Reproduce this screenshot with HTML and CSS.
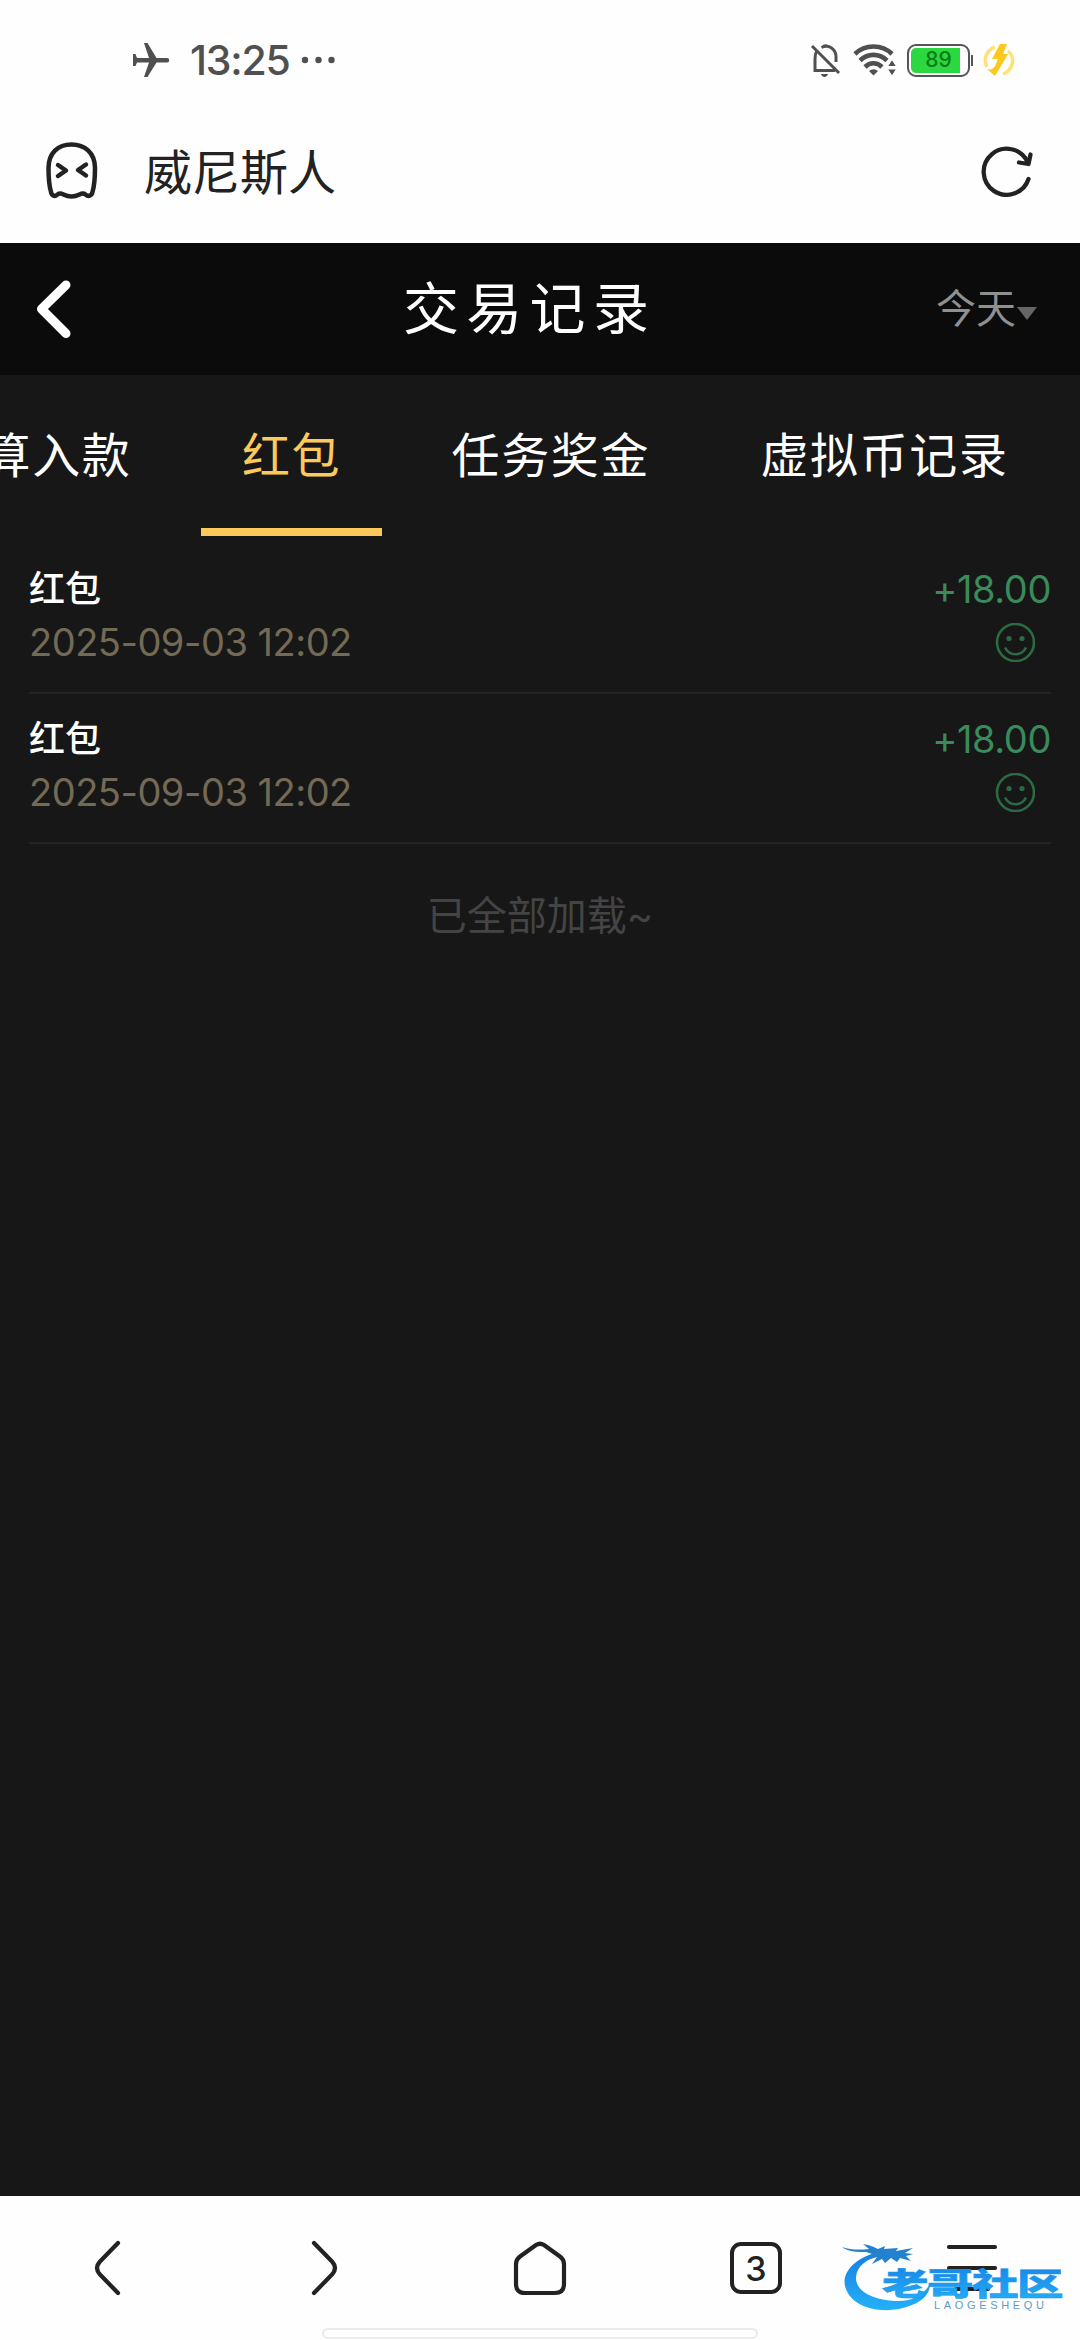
FILE: index.html
```html
<!DOCTYPE html>
<html lang="zh-CN">
<head>
    <meta charset="UTF-8">
    <meta name="viewport" content="width=device-width, initial-scale=1.0">
    <title>交易记录</title>
    <link rel="stylesheet" href="styles.css">
</head>
<body>
    <div class="status-bar">
        <div class="status-left">
            <svg class="plane" width="38" height="36" viewBox="0 0 38 36">
                <path fill="#505050" d="M1 12h2.500l1.500 4h12L12 1h3.500l9 15H35a2.200 2.200 0 0 1 0 4.500H24.500l-9 14.500H12l5-14.500H5L3.500 24H1z"/>
            </svg>
            <span class="time">13:25</span>
            <svg width="34" height="10" viewBox="0 0 34 10" fill="#505050">
                <circle cx="4" cy="5" r="3.200"/><circle cx="17.500" cy="5" r="3.200"/><circle cx="30.500" cy="5" r="3.200"/>
            </svg>
        </div>
        <div class="status-right">
            <svg width="32" height="36" viewBox="0 0 32 36" fill="none" stroke="#505050" stroke-width="3">
                <path d="M2 4l27 27"/>
                <path d="M11.500 5.500C19 2 26 7 26 15v5"/>
                <path d="M6.500 9.500C5 12 5 14 5 17v11.500h20"/>
                <path fill="#505050" stroke="none" d="M12 4.500c1-3 6-3 7 0zM11 32h7c-1 4-6 4-7 0z"/>
            </svg>
            <svg class="wifi" width="44" height="36" viewBox="0 0 44 36" fill="none" stroke="#505050" stroke-width="4.600">
                <path d="M2 12C12 2 29 2 39 12"/>
                <path d="M7 18.500c8-7.500 19-7.500 27 0"/>
                <path d="M12 25c5-5 12-5 17 0"/>
                <path fill="#505050" stroke="none" d="M16 29q4.500-3.500 9 0l-4.500 4.500z"/>
                <path fill="#505050" stroke="#fefefe" stroke-width="1" d="M39 17.500l4.500 7h-9zM39 34l4.500-7h-9z"/>
            </svg>
            <div class="battery"><div class="battery-level">89</div></div>
            <svg class="charge" width="34" height="36" viewBox="0 0 34 36">
                <path fill="none" stroke="#ffe07a" stroke-width="3.500" d="M12 5A14 14 0 0 0 4 25M25 9c8 7 5 19-5 23"/>
                <path fill="#fbc81b" d="M17 2h7l-4 10h5L12 34l-8-7c4 1 6 0 8-3l3-7H9z"/>
            </svg>
        </div>
    </div>

    <div class="address-bar">
        <svg class="ghost" width="54" height="58" viewBox="0 0 54 58" fill="none" stroke="#222" stroke-width="4.500" stroke-linecap="round" stroke-linejoin="round">
            <path d="M3.500 27C3.500 12 13 3.500 26.500 3.500S50 12 50 27c0 9-.5 17-2.500 24-1 4-4 5-7 2.500-2-1.500-4-1-6 0-5 2.500-11 2.500-16 0-2-1-4-1.500-6 0-3 2.500-5.500 1.500-6.500-2.500C4 44 3.500 36 3.500 27z"/>
            <path d="M13 24l8 5.500-8 5.500M41 23.500L33 29l8 5.500"/>
        </svg>
        <span class="site-name">威尼斯人</span>
        <svg class="refresh" width="54" height="54" viewBox="0 0 54 54" fill="none" stroke="#222" stroke-width="4.300" stroke-linecap="round" stroke-linejoin="round">
            <path d="M48.500 36A23 23 0 1 1 47.500 19"/>
            <path d="M50.500 11.500L48.500 21l-9.500-1.500"/>
        </svg>
    </div>

    <div class="header">
        <svg class="back" width="40" height="64" viewBox="0 0 40 64" fill="none" stroke="#fff" stroke-width="9" stroke-linecap="round" stroke-linejoin="round">
            <path d="M34 8L9.500 32 34 56.500"/>
        </svg>
        <h1>交易记录</h1>
        <div class="filter">今天<span class="arrow"></span></div>
    </div>

    <div class="tabs">
        <div class="tab">结算入款</div>
        <div class="tab active">红包</div>
        <div class="tab">任务奖金</div>
        <div class="tab">虚拟币记录</div>
    </div>

    <div class="records">
        <div class="record">
            <div>
                <div class="record-name">红包</div>
                <div class="record-date">2025-09-03 12:02</div>
            </div>
            <div class="record-right">
                <div class="amount">+18.00</div>
                <svg class="smile" width="40" height="39" viewBox="0 0 40 39" fill="none" stroke="#2c6a46" stroke-width="2.600">
                    <circle cx="20.500" cy="19.500" r="18.500"/>
                    <path d="M10 24.500c4.500 9 16.500 9 21 0"/>
                    <circle cx="14" cy="15.500" r="2.600" fill="#2c6a46" stroke="none"/>
                    <circle cx="27" cy="15.500" r="2.600" fill="#2c6a46" stroke="none"/>
                </svg>
            </div>
        </div>
        <div class="record">
            <div>
                <div class="record-name">红包</div>
                <div class="record-date">2025-09-03 12:02</div>
            </div>
            <div class="record-right">
                <div class="amount">+18.00</div>
                <svg class="smile" width="40" height="39" viewBox="0 0 40 39" fill="none" stroke="#2c6a46" stroke-width="2.600">
                    <circle cx="20.500" cy="19.500" r="18.500"/>
                    <path d="M10 24.500c4.500 9 16.500 9 21 0"/>
                    <circle cx="14" cy="15.500" r="2.600" fill="#2c6a46" stroke="none"/>
                    <circle cx="27" cy="15.500" r="2.600" fill="#2c6a46" stroke="none"/>
                </svg>
            </div>
        </div>
        <p class="all-loaded">已全部加载~</p>
    </div>

    <div class="bottom-bar">
        <div class="nav">
            <svg width="56" height="56" viewBox="0 0 56 56"><path d="M38 3L20 21.500q-6 6.500 0 13L38 53"/></svg>
            <svg width="56" height="56" viewBox="0 0 56 56"><path d="M18 3l18 18.500q6 6.500 0 13L18 53"/></svg>
            <svg width="56" height="56" viewBox="0 0 56 56"><path d="M24 5Q28 2.500 32 5L48 16.500Q52 19.500 52 24v20q0 9-9 9H13q-9 0-9-9V24q0-4.500 4-7.500z"/></svg>
            <div class="tab-count">3</div>
            <svg width="56" height="56" viewBox="0 0 56 56"><path d="M5 7h46M5 28h46M12 49h32"/></svg>
        </div>
        <div class="home-indicator"></div>

        <!-- community logo, floats over the menu button -->
        <svg class="logo" width="228" height="80" viewBox="0 0 228 80">
            <defs>
                <linearGradient id="blue" x1="0" y1="0" x2="0" y2="1">
                    <stop offset="0" stop-color="#1580e4"/>
                    <stop offset="1" stop-color="#24b0f8"/>
                </linearGradient>
            </defs>
            <path fill="url(#blue)" d="M34 14C12 20-1 36 5 50c7 20 40 27 66 16 13-5 18-13 18-21-7 12-20 18-35 17C32 61 14 52 15 38c1-11 10-18 26-22z"/>
            <path fill="#2381ce" d="M1 8c9 3 17 3 27 2l-6-5c7 1 11 3 15 5l7-3-1 3 14-1-2 3 17-3-8 5 8 1-7 2 5 5-11-3-3 4-6-4-6 5-3-4-10 5 5-7-10 3 5-6-6-2C16 13 8 13 1 8z"/>
            <text class="logo-name" x="41" y="56" textLength="121" lengthAdjust="spacing" transform="matrix(1.500 0 0 1 -20.500 0)">老哥社区</text>
            <text class="logo-latin" x="93" y="70" textLength="110" lengthAdjust="spacing">LAOGESHEQU</text>
        </svg>
    </div>
</body>
</html>
```
FILE: styles.css
```css
* {
    box-sizing: border-box;
}

body {
    margin: 0;
    height: 2340px;
    display: flex;
    flex-direction: column;
    overflow: hidden;
    background-color: #171717;
    font-family: Inter, "Noto Sans CJK SC", sans-serif;
}

svg {
    display: block;
    flex: none;
}

/* Phone status bar */
.status-bar {
    height: 120px;
    padding: 0 63px 0 132px;
    display: flex;
    justify-content: space-between;
    align-items: center;
    background: #fefefe;
}

.status-left, .status-right {
    display: flex;
    align-items: center;
}

.time {
    width: 98px;
    margin: 0 13px 0 20px;
    font-size: 41px;
    font-weight: 450;
    letter-spacing: -1.2px;
    color: #505050;
    white-space: nowrap;
}

.wifi {
    margin-left: 11px;
}

.battery {
    position: relative;
    width: 63px;
    height: 33px;
    margin-left: 10px;
    padding: 2px;
    border: 2px solid #555;
    border-radius: 9px;
}

.battery::after {
    content: "";
    position: absolute;
    right: -5px;
    top: 9px;
    width: 2px;
    height: 11px;
    background: #555;
}

.battery-level {
    width: 49px;
    height: 25px;
    padding-left: 6px;
    border-radius: 5px 0 0 5px;
    background: #2bd840;
    color: #087d16;
    font-size: 21px;
    font-weight: 500;
    line-height: 24px;
    text-align: center;
}

.charge {
    margin-left: 13px;
}

/* Browser address bar */
.address-bar {
    height: 123px;
    padding: 0 46px 23px 45px;
    display: flex;
    align-items: center;
    background: #fefefe;
}

.site-name {
    flex: 1;
    margin: 5px 0 0 45px;
    font-size: 48px;
    line-height: 60px;
    color: #222;
}

.refresh {
    margin-bottom: 1px;
}

/* Page header */
.header {
    height: 132px;
    padding: 0 43px 0 32px;
    display: flex;
    align-items: center;
    background: #0b0b0b;
}

.header h1 {
    flex: 1;
    margin: 0 0 0 331px;
    font-size: 56px;
    font-weight: 400;
    line-height: 80px;
    letter-spacing: 7.3px;
    color: #fff;
}

.filter {
    display: flex;
    align-items: center;
    font-size: 40px;
    line-height: 60px;
    color: #909090;
}

.arrow {
    margin: 8px 0 0 1px;
    border: 10.5px solid transparent;
    border-top: 13px solid #666;
    border-bottom: 0;
}

/* Tabs */
.tabs {
    height: 161px;
    margin-left: -108px;
    display: flex;
    gap: 28.5px;
    white-space: nowrap;
}

.tab {
    flex: none;
    height: 161px;
    padding: 0 41px;
    border-bottom: 8px solid transparent;
    font-size: 48px;
    line-height: 162px;
    letter-spacing: 1.6px;
    color: #fff;
}

.tab.active {
    border-color: #fdc95c;
    color: #fdc95c;
}

/* Records */
.records {
    flex: 1;
    padding: 0 29px;
}

.record {
    height: 150px;
    padding-top: 17px;
    display: flex;
    justify-content: space-between;
    border-bottom: 2px solid #232323;
}

.record:first-child {
    height: 158px;
    padding-top: 25px;
}

.record-name {
    font-size: 36px;
    font-weight: 500;
    line-height: 57px;
    color: #fff;
}

.record-date {
    font-size: 38px;
    line-height: 49px;
    letter-spacing: -0.5px;
    color: #736a55;
}

.record-right {
    display: flex;
    flex-direction: column;
    align-items: flex-end;
}

.amount {
    font-size: 38px;
    line-height: 57px;
    letter-spacing: -0.4px;
    color: #3a8a5b;
}

.smile {
    margin: 5px 16px 0 0;
}

.all-loaded {
    margin: 42px 0 0;
    text-align: center;
    font-size: 40px;
    line-height: 60px;
    color: #444;
}

/* Browser bottom bar */
.bottom-bar {
    position: relative;
    height: 144px;
    padding-top: 44px;
    background: #fefefe;
}

.nav {
    display: flex;
}

.nav svg {
    margin: 0 80px;
    fill: none;
    stroke: #222;
    stroke-width: 4.2;
    stroke-linecap: round;
    stroke-linejoin: round;
}

.tab-count {
    width: 52px;
    height: 52px;
    margin: 2px 82px;
    border: 4px solid #222;
    border-radius: 11px;
    color: #222;
    font-size: 34px;
    font-weight: 500;
    line-height: 45px;
    text-align: center;
}

.home-indicator {
    width: 436px;
    height: 11px;
    margin: 32px auto 0;
    border: 2px solid #ebebeb;
    border-radius: 6px;
}

.logo {
    position: absolute;
    left: 841px;
    top: 43px;
}

.logo-name {
    font-family: "Noto Sans CJK SC", sans-serif;
    font-size: 31px;
    font-weight: 900;
    fill: url(#blue);
    stroke: #1d95ee;
    stroke-width: 0.5;
}

.logo-latin {
    font-family: "Liberation Sans", sans-serif;
    font-size: 11px;
    fill: #5e9cc9;
}
```
